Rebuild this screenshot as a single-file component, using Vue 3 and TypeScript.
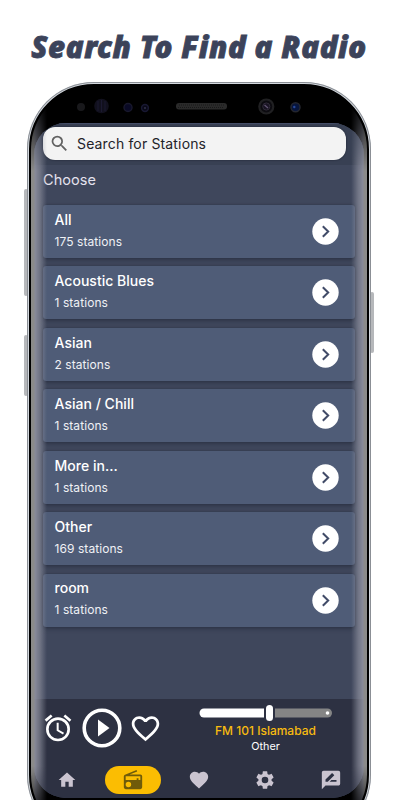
<script setup lang="ts">
interface Category {
  name: string
  count: number
}

const categories: Category[] = [
  { name: 'All', count: 175 },
  { name: 'Acoustic Blues', count: 1 },
  { name: 'Asian', count: 2 },
  { name: 'Asian / Chill', count: 1 },
  { name: 'More in…', count: 1 },
  { name: 'Other', count: 169 },
  { name: 'room', count: 1 },
]
</script>

<template>
  <main class="page">
    <h1 class="headline">Search To Find a Radio</h1>
    <div class="device">
      <i class="key volume"></i>
      <i class="key bixby"></i>
      <i class="key power"></i>
      <div class="shell">
        <div class="glass">
          <svg class="sensors" width="336" height="37" viewBox="31 86 336 37">
            <circle cx="81" cy="107" r="4" fill="#19191c" />
            <circle cx="101.500" cy="106" r="7.300" fill="#11101d" />
            <path d="M98 101v10M101.500 100v12M105 101v10" stroke="#1b1930" />
            <circle cx="128" cy="107.500" r="4" fill="#090925" stroke="#18182c" stroke-width="1.500" />
            <circle cx="145" cy="108" r="3.400" fill="#080816" stroke="#181832" stroke-width="1.500" />
            <circle cx="145" cy="108" r="1" fill="#30304a" />
            <rect x="176" y="103" width="51" height="6.500" rx="3" fill="#2a2a2a" />
            <path d="M179 105h46M178 107.500h46" stroke="#191919" stroke-dasharray="1 1" />
            <circle cx="266.300" cy="106.500" r="7" fill="#0c0b10" stroke="#202022" stroke-width="2.200" />
            <circle cx="266.300" cy="106.500" r="3.600" fill="#181322" stroke="#302b38" />
            <path d="M264.500 105l3.500 3" stroke="#625573" stroke-width="1.200" />
            <circle cx="295.500" cy="107.300" r="4.500" fill="#07153d" stroke="#24262e" stroke-width="1.500" />
            <circle cx="294.300" cy="107" r="1.200" fill="#28499b" />
          </svg>
          <div class="screen">
            <div class="top">
              <div class="search">
                <svg width="21" height="21" viewBox="0 0 24 24"><path fill="#626262" d="M15.500 14h-.790l-.280-.270A6.470 6.470 0 0 0 16 9.500 6.500 6.500 0 1 0 9.500 16c1.610 0 3.090-.590 4.230-1.570l.270.280v.790l5 4.990L20.490 19l-4.990-5zm-6 0C7.010 14 5 11.990 5 9.500S7.010 5 9.500 5 14 7.010 14 9.500 11.990 14 9.500 14z" /></svg>
                <span>Search for Stations</span>
              </div>
            </div>
            <div class="body">
              <h2 class="choose">Choose</h2>
              <div class="list">
                <div v-for="c in categories" :key="c.name" class="card">
                  <div class="labels">
                    <b>{{ c.name }}</b>
                    <span>{{ c.count }} stations</span>
                  </div>
                  <svg width="27" height="27" viewBox="0 0 27 27">
                    <circle cx="13.500" cy="13.500" r="13.200" fill="#fff" />
                    <path d="M10.800 8.200l5.400 5.300-5.400 5.300" fill="none" stroke="#414b68" stroke-width="2" />
                  </svg>
                </div>
              </div>
            </div>
            <div class="footer">
              <div class="player">
                <svg class="alarm" width="32" height="32" viewBox="0 0 24 24"><path fill="#fff" d="M22 5.720l-4.600-3.860-1.290 1.530 4.600 3.860L22 5.720zM7.880 3.390L6.600 1.860 2 5.710l1.290 1.530 4.590-3.850zM12.500 8H11v6l4.750 2.850.750-1.230-4-2.370V8zM12 4a9 9 0 1 0 0 18 9 9 0 0 0 0-18zm0 16a7 7 0 1 1 0-14 7 7 0 0 1 0 14z" /></svg>
                <svg class="play" width="40" height="40" viewBox="0 0 40 40"><circle cx="20" cy="20" r="17.800" fill="none" stroke="#fff" stroke-width="3.600" /><path d="M16 11.500v17L27.500 20z" fill="#fff" /></svg>
                <svg class="heart" width="33" height="33" viewBox="0 0 24 24"><path fill="#fff" d="M16.500 3c-1.740 0-3.410.810-4.500 2.090C10.910 3.810 9.240 3 7.500 3 4.420 3 2 5.420 2 8.500c0 3.780 3.400 6.860 8.550 11.540L12 21.350l1.450-1.320C18.600 15.360 22 12.280 22 8.500 22 5.420 19.580 3 16.500 3zm-4.400 15.550l-.100.100-.100-.100C7.140 14.240 4 11.390 4 8.500 4 6.500 5.500 5 7.500 5c1.540 0 3.040.990 3.570 2.360h1.870C13.460 5.990 14.960 5 16.500 5c2 0 3.500 1.500 3.500 3.500 0 2.890-3.140 5.740-7.900 10.050z" /></svg>
                <div class="now">
                  <svg width="134" height="18" viewBox="0 0 134 18">
                    <path d="M5 4.500h60v9H5a4.500 4.500 0 0 1 0-9" fill="#fff" />
                    <path d="M76 4.500h52.500a4.500 4.500 0 0 1 0 9H76z" fill="#858585" />
                    <rect x="67" y="1" width="7" height="16" rx="3.500" fill="#fff" />
                    <circle cx="128.500" cy="9" r="1.800" fill="#fff" />
                  </svg>
                  <strong>FM 101 Islamabad</strong>
                  <small>Other</small>
                </div>
              </div>
              <nav class="tabs">
                <span><svg width="20" height="20" viewBox="0 0 24 24"><path fill="#cac4d0" d="M10 20v-6h4v6h5v-8h3L12 3 2 12h3v8z" /></svg></span>
                <span class="active"><svg width="22" height="22" viewBox="0 0 24 24"><path fill="#6f5b0a" d="M3.240 6.150C2.510 6.430 2 7.170 2 8v12a2 2 0 0 0 2 2h16a2 2 0 0 0 2-2V8a2 2 0 0 0-2-2H8.300l8.260-3.340L15.880 1 3.240 6.150zM7 20a3 3 0 1 1 0-6 3 3 0 0 1 0 6zm13-8h-2v-2h-2v2H4V8h16v4z" /></svg></span>
                <span><svg width="22" height="22" viewBox="0 0 24 24"><path fill="#cac4d0" d="M12 21.350l-1.450-1.320C5.400 15.360 2 12.280 2 8.500 2 5.420 4.420 3 7.500 3c1.740 0 3.410.810 4.500 2.090C13.090 3.810 14.760 3 16.500 3 19.580 3 22 5.420 22 8.500c0 3.780-3.400 6.860-8.550 11.540z" /></svg></span>
                <span><svg width="22" height="22" viewBox="0 0 24 24"><path fill="#cac4d0" d="M19.140 12.940c.040-.300.060-.610.060-.940 0-.320-.020-.640-.070-.940l2.030-1.580c.180-.140.230-.410.120-.610l-1.920-3.320c-.120-.220-.370-.290-.590-.220l-2.390.960c-.500-.380-1.030-.700-1.620-.940l-.360-2.540c-.040-.240-.240-.410-.480-.410h-3.840c-.240 0-.430.170-.470.410l-.360 2.540c-.590.240-1.130.570-1.620.940l-2.390-.960c-.220-.080-.470 0-.590.220L2.740 8.870c-.120.210-.080.470.120.610l2.030 1.580c-.050.300-.090.630-.090.940s.020.640.070.940l-2.030 1.580c-.180.140-.230.410-.120.610l1.920 3.320c.120.220.370.290.590.220l2.390-.960c.500.380 1.030.700 1.620.940l.360 2.540c.050.240.240.410.480.410h3.840c.240 0 .440-.170.470-.410l.360-2.540c.590-.240 1.130-.560 1.620-.940l2.390.960c.220.080.470 0 .590-.220l1.920-3.320c.120-.220.070-.470-.120-.610l-2.010-1.580zM12 15.600A3.600 3.600 0 1 1 12 8.400a3.600 3.600 0 0 1 0 7.200z" /></svg></span>
                <span><svg width="22" height="22" viewBox="0 0 24 24"><path fill="#cac4d0" d="M20 2H4C2.900 2 2 2.900 2 4v18l4-4h14c1.100 0 2-.900 2-2V4c0-1.100-.900-2-2-2z" /><path fill="#2d3142" d="M6 14v-2.470l6.880-6.880c.200-.200.510-.200.710 0l1.770 1.770c.200.200.200.510 0 .710L8.470 14zM18 14h-7.500l2-2H18z" /></svg></span>
              </nav>
            </div>
          </div>
          <i class="edge left"></i>
          <i class="edge right"></i>
        </div>
      </div>
    </div>
  </main>
</template>

<style>
html,
body {
  background: #fff;
  overflow: hidden;
}
</style>

<style scoped>
.page {
  width: 400px;
  height: 800px;
  overflow: hidden;
  background: #fff;
  font-family: Inter, 'Open Sans', sans-serif;
}
.headline {
  height: 82px;
  margin: 0;
  padding: 27px 2px 0 0;
  box-sizing: border-box;
  text-align: center;
  font: italic 900 29.500px/40px 'Noto Sans', sans-serif;
  letter-spacing: 0.600px;
  white-space: nowrap;
  color: #3c435a;
  -webkit-text-stroke: 0.800px #3c435a;
}
.device {
  position: relative;
  width: 344px;
  margin-left: 27px;
}
.key {
  position: absolute;
  width: 4px;
  background: #b6b8bb;
  border-radius: 2px;
}
.volume { left: -3px; top: 107px; height: 107px; }
.bixby { left: -3px; top: 253px; height: 61px; }
.power { right: -3px; top: 210px; height: 61px; }
.shell {
  position: relative;
  height: 760px;
  padding: 2px;
  box-sizing: border-box;
  border-radius: 67px;
  background: #d3d8de;
  box-shadow: inset 0 0 0 1px #8b8f95;
}
.glass {
  position: relative;
  height: 100%;
  box-sizing: border-box;
  border: 2px solid #000;
  border-radius: 65px;
  background: #000;
  overflow: hidden;
}
.sensors {
  display: block;
}
.screen {
  display: flex;
  flex-direction: column;
  height: 675px;
  margin: 0 3px;
  border-radius: 32px;
  overflow: hidden;
  background: #3f475c;
}
.top {
  flex: none;
  height: 42px;
  padding: 3px 18px 0 9px;
  box-sizing: border-box;
  background: #384053;
  border-top: 1px solid #444d67;
}
.search {
  display: flex;
  align-items: center;
  gap: 7px;
  height: 33px;
  padding: 0 0 1px 6px;
  box-sizing: border-box;
  border-radius: 12px;
  background: #f3f3f3;
  box-shadow: 0 0 2px #171d2c;
  color: #232329;
  font-size: 14px;
  letter-spacing: 0.150px;
}
.body {
  flex: 1;
  padding: 5px 9px 0;
}
.choose {
  margin: 0;
  color: #e4e2ee;
  font-size: 14.500px;
  letter-spacing: 0.050px;
  font-weight: 400;
  line-height: 20px;
}
.list {
  display: flex;
  flex-direction: column;
  gap: 8.450px;
  margin-top: 15px;
}
.card {
  display: flex;
  justify-content: space-between;
  align-items: center;
  height: 53px;
  padding: 0 16px 0 11.500px;
  box-sizing: border-box;
  border-radius: 3px;
  background: #4f5c77;
  box-shadow: 0 2px 4px #252c3c99, 0 0 2px #252c3c99;
  color: #fff;
}
.labels {
  display: flex;
  flex-direction: column;
  gap: 3px;
  padding-bottom: 2.500px;
}
.labels b {
  font-size: 14px;
  line-height: 20px;
  font-weight: 500;
  letter-spacing: 0.020px;
}
.labels span {
  font-size: 12px;
  line-height: 18px;
  letter-spacing: 0.070px;
  color: #f0f1f5;
}
.footer {
  flex: none;
  height: 99px;
  background: #2d3142;
}
.player {
  display: flex;
  height: 60px;
  padding-left: 8px;
}
.alarm { margin-top: 12.500px; }
.play { margin: 9px 0 0 7.500px; }
.heart { margin: 13px 0 0 7.500px; }
.now {
  display: flex;
  flex-direction: column;
  align-items: center;
  width: 134px;
  margin: 5px 0 0 36.500px;
}
.now strong {
  color: #f8bb10;
  font-size: 12px;
  line-height: 17px;
  font-weight: 500;
  white-space: nowrap;
}
.now small {
  color: #fff;
  font-size: 10.800px;
  line-height: 15px;
}
.tabs {
  display: grid;
  grid-template-columns: repeat(5, 66px);
  justify-content: center;
  padding-top: 6.500px;
}
.tabs span {
  display: flex;
  align-items: center;
  justify-content: center;
  justify-self: center;
  width: 56px;
  height: 28px;
  border-radius: 14px;
}
.tabs .active {
  background: #fbbd02;
}
.edge {
  position: absolute;
  top: 0;
  width: 16px;
  height: 100%;
  mask-image: linear-gradient(transparent 10px, #000 85px, #000 680px, #0006 715px);
}
.left {
  left: 0;
  background: linear-gradient(90deg, #8b8b8a 0 3px, #9092a0e6 4px, #9092a099 9px, #9092a000 100%);
}
.right {
  right: 0;
  background: linear-gradient(270deg, #8b8b8a 0 3px, #9092a0e6 4px, #9092a099 9px, #9092a000 100%);
}
</style>
